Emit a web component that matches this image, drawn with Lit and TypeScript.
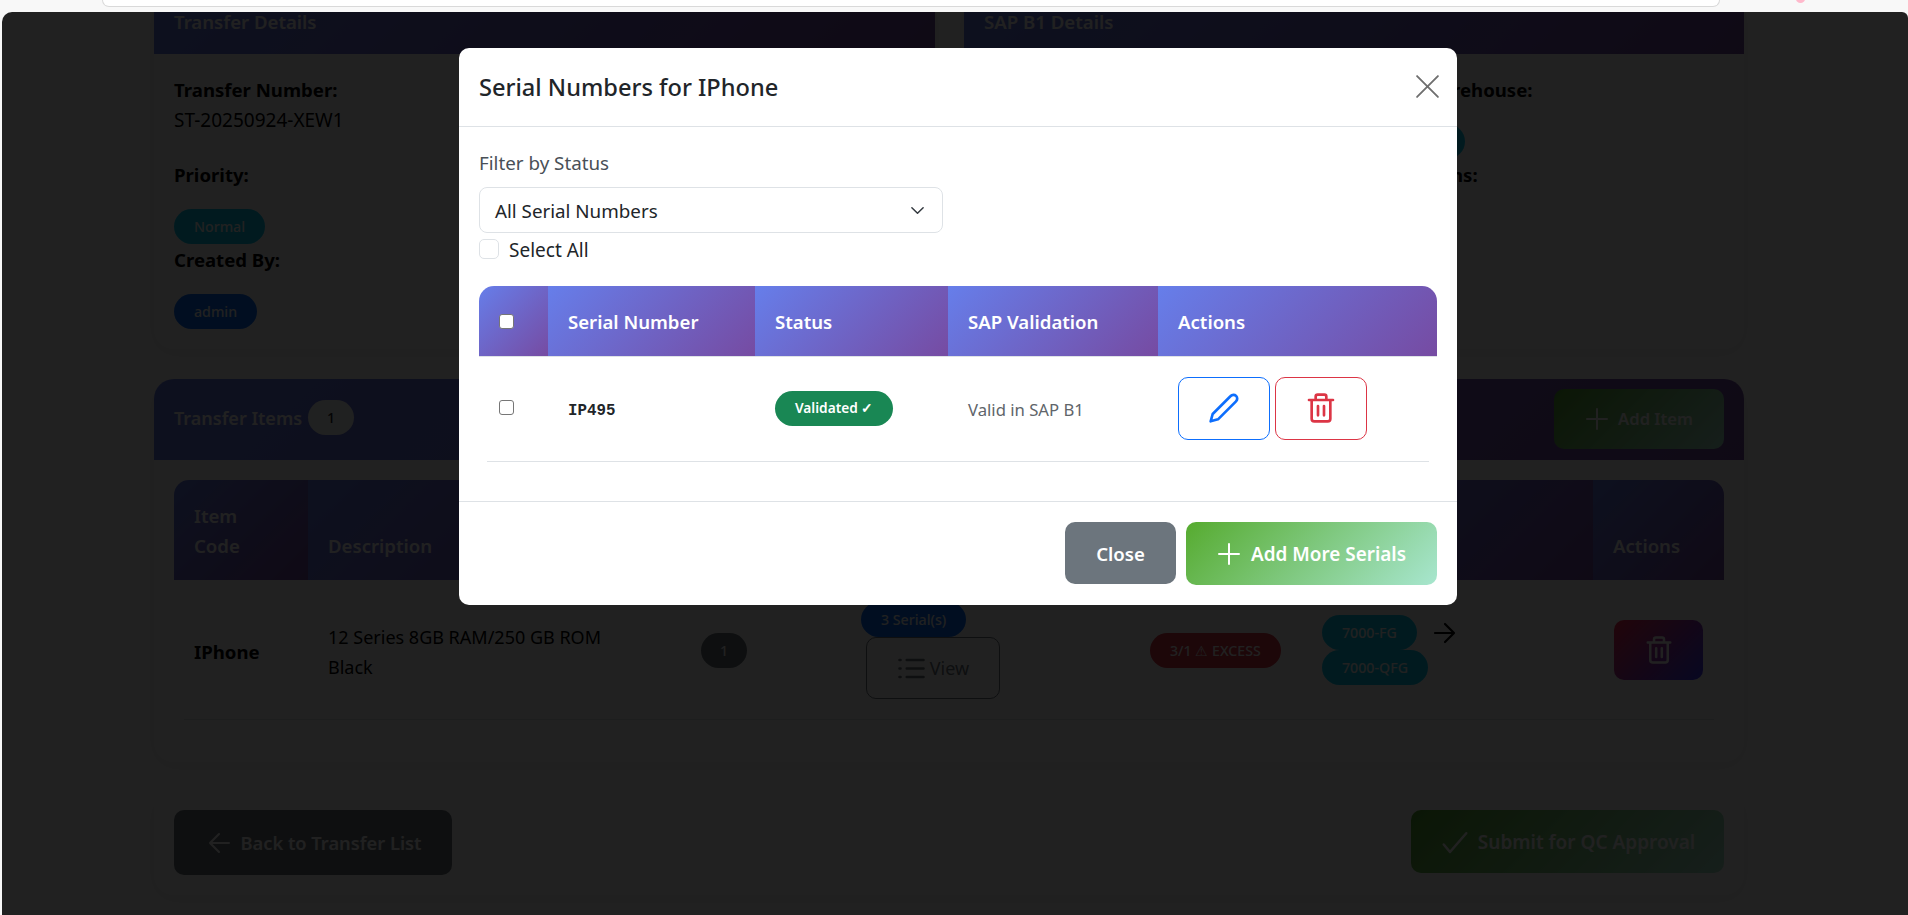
import {LitElement, html, css, svg} from 'lit';
import {customElement} from 'lit/decorators.js';

const icon = (body: unknown, size: number, sw = 2) => html`<svg width=${size} height=${size} viewBox="0 0 24 24" fill="none" stroke="currentColor" stroke-width=${sw} stroke-linecap="round" stroke-linejoin="round">${body}</svg>`;

const plus = svg`<path d="M12 2v20M2 12h20"/>`;
const pencil = svg`<path d="M17 3a2.83 2.83 0 1 1 4 4L7.5 20.5 2 22l1.5-5.5L17 3z"/>`;
const trash = svg`<path d="M3 6h18M8 6V3.5A1.5 1.5 0 0 1 9.5 2h5A1.5 1.5 0 0 1 16 3.5V6M5 6v14a2 2 0 0 0 2 2h10a2 2 0 0 0 2-2V6M9.75 10.5v7M14.25 10.5v7"/>`;
const arrowLeft = svg`<path d="M21 12H3M11 3l-9 9 9 9"/>`;
const arrowRight = svg`<path d="M3 12h18M13 3l9 9-9 9"/>`;
const check = svg`<path d="M3 14l5 6L21 5"/>`;
const list = svg`<path d="M8 5h14M8 12h14M8 19h14M2 5h1M2 12h1M2 19h1"/>`;

@customElement('serial-modal')
export class SerialModal extends LitElement {
  static styles = css`
    :host {
      display: flex;
      flex-direction: column;
      width: 998px;
      background: #fff;
      border-radius: 10px;
      color: #212529;
      font-family: "Noto Sans", sans-serif;
    }
    .head {
      height: 78px;
      padding: 0 20px;
      display: flex;
      align-items: center;
      justify-content: space-between;
      border-bottom: 1px solid #dee2e6;
    }
    h5 {
      margin: 0;
      font-size: 23.6px;
      font-weight: 500;
    }
    .close-x {
      color: #6f6f6f;
      display: flex;
      margin: 0 -3px 2px 0;
    }
    .body {
      padding: 24px 20px 0;
      height: 375px;
      box-sizing: border-box;
      border-bottom: 1px solid #dee2e6;
      flex: none;
    }
    .label {
      line-height: 24px;
      font-size: 18.8px;
      color: #495057;
      margin-bottom: 12px;
    }
    .select {
      width: 464px;
      height: 46px;
      box-sizing: border-box;
      border: 1px solid #dee2e6;
      border-radius: 8px;
      padding: 0 17px 0 15px;
      display: flex;
      align-items: center;
      justify-content: space-between;
      font-size: 18.8px;
    }
    .select span { padding-top: 1px; }
    .select svg { width: 15px; height: 15px; }
    .select-all {
      display: flex;
      align-items: center;
      gap: 10px;
      margin-top: 6px;
      height: 20px;
      font-size: 19px;
    }
    .select-all span { padding-top: 1px; }
    .box {
      appearance: none;
      margin: 0;
      flex: none;
      box-sizing: border-box;
      background: #fff;
    }
    .box.big {
      width: 20px;
      height: 20px;
      border: 1px solid #dee2e6;
      border-radius: 5px;
    }
    .box.small {
      width: 15px;
      height: 15px;
      border: 1px solid #767676;
      border-radius: 3px;
    }
    .table { margin-top: 27px; }
    .thead {
      display: grid;
      grid-template-columns: 69px 207px 193px 210px 279px;
      height: 71px;
      box-sizing: border-box;
      border-bottom: 1px solid #dee2e6;
      border-radius: 15px 15px 0 0;
      overflow: hidden;
    }
    .thead > div {
      display: flex;
      align-items: center;
      padding-left: 20px;
      background: linear-gradient(135deg, #667eea 0%, #764ba2 100%);
      color: #fff;
      font-size: 18.6px;
      font-weight: 600;
    }
    .tr {
      display: grid;
      grid-template-columns: 61px 207px 193px 210px 271px;
      height: 105px;
      box-sizing: border-box;
      margin: 0 8px;
      border-bottom: 1px solid #dee2e6;
      align-items: center;
    }
    .tr > div { padding-left: 20px; }
    .tr > div:first-child { padding-left: 12px; display: flex; margin-top: -3px; }
    .serial {
      font-family: "Liberation Mono", monospace;
      font-weight: 700;
      font-size: 15.8px;
      padding-top: 3px;
    }
    .pill {
      display: inline-block;
      background: #198754;
      color: #fff;
      padding: 0 20px;
      height: 35px;
      line-height: 34px;
      border-radius: 18px;
      font-size: 13.7px;
      font-weight: 600;
      margin-top: -1px;
    }
    .valid { color: #60656a; font-size: 16.7px; }
    .btns { display: flex; gap: 5px; margin-top: -2px; }
    .btns span {
      width: 92px;
      height: 63px;
      box-sizing: border-box;
      display: flex;
      align-items: center;
      justify-content: center;
      border-radius: 10px;
      border: 1px solid;
    }
    .edit { border-color: #0d6efd; color: #0d6efd; }
    .del { border-color: #dc3545; color: #dc3545; }
    .foot {
      display: flex;
      justify-content: flex-end;
      gap: 10px;
      padding: 20px;
    }
    .btn {
      display: flex;
      align-items: center;
      justify-content: center;
      color: #fff;
      font-size: 18.6px;
      font-weight: 600;
      border-radius: 10px;
      height: 63px;
    }
    .btn.close {
      width: 111px;
      height: 62px;
      background: #6c757d;
    }
    .btn.add {
      width: 251px;
      gap: 10px;
      font-size: 18.9px;
      background: linear-gradient(135deg, #56ab2f 0%, #a8e6cf 100%);
    }
  `;

  render() {
    return html`
      <div class="head">
        <h5>Serial Numbers for IPhone</h5>
        <span class="close-x">${icon(svg`<path d="M2 2l20 20M22 2L2 22"/>`, 25, 1.8)}</span>
      </div>
      <div class="body">
        <div class="label">Filter by Status</div>
        <div class="select">
          <span>All Serial Numbers</span>
          <svg viewBox="0 0 16 16" fill="none" stroke="#343a40" stroke-width="1.6" stroke-linecap="round" stroke-linejoin="round"><path d="m2 5 6 6 6-6"/></svg>
        </div>
        <div class="select-all"><input class="box big" type="checkbox" /><span>Select All</span></div>
        <div class="table">
          <div class="thead">
            <div><input class="box small" type="checkbox" /></div>
            <div>Serial Number</div>
            <div>Status</div>
            <div>SAP Validation</div>
            <div>Actions</div>
          </div>
          <div class="tr">
            <div><input class="box small" type="checkbox" /></div>
            <div class="serial">IP495</div>
            <div><span class="pill">Validated ✓</span></div>
            <div class="valid">Valid in SAP B1</div>
            <div class="btns">
              <span class="edit">${icon(pencil, 32, 2)}</span>
              <span class="del">${icon(trash, 32, 2)}</span>
            </div>
          </div>
        </div>
      </div>
      <div class="foot">
        <div class="btn close">Close</div>
        <div class="btn add">${icon(plus, 24, 2)}Add More Serials</div>
      </div>
    `;
  }
}

@customElement('app-root')
export class AppRoot extends LitElement {
  static styles = css`
    :host {
      display: block;
      width: 1908px;
      height: 915px;
      overflow: hidden;
      background: #f8f8f8;
      font-family: "Noto Sans", sans-serif;
      color: #000;
    }
    .chrome {
      height: 12px;
      padding: 0 188px 0 102px;
      position: relative;
    }
    .omnibox {
      height: 6px;
      background: #fff;
      border: 1px solid #d9d9d9;
      border-top: none;
      border-radius: 0 0 14px 14px;
    }
    .dot {
      position: absolute;
      top: -5px;
      left: 1796px;
      width: 9px;
      height: 8px;
      border-radius: 50%;
      background: #ffb9cc;
    }
    .viewport {
      position: relative;
      margin-left: 2px;
      height: 903px;
      overflow: hidden;
      background: #fff;
      border-radius: 10px 6px 0 0;
    }
    .page {
      width: 1590px;
      margin: -18px 0 0 152px;
      font-size: 18.6px;
    }
    .backdrop {
      position: absolute;
      inset: 0;
      background: rgba(0, 0, 0, 0.87);
    }
    .dialog {
      position: absolute;
      left: 457px;
      top: 36px;
    }
    .details {
      display: grid;
      grid-template-columns: 781px 780px;
      gap: 29px;
    }
    .card {
      background: #fff;
      border-radius: 20px;
      box-shadow: 0 4px 20px rgba(0, 0, 0, 0.08);
    }
    .card-head {
      height: 60px;
      box-sizing: border-box;
      padding: 18px 20px 0;
      line-height: 20px;
      color: #fff;
      font-weight: 600;
      background: linear-gradient(135deg, #667eea 0%, #764ba2 100%);
    }
    .card-body {
      padding: 24px 20px 20px;
      height: 295px;
      box-sizing: border-box;
    }
    .split {
      display: grid;
      grid-template-columns: 375px 365px;
    }
    .field-label { font-weight: 700; line-height: 24px; }
    .field-value { line-height: 24px; margin-top: 6px; font-size: 19px; }
    .gap-a { margin-top: 31px; }
    .gap-b { margin-top: 4px; }
    .badge {
      display: inline-block;
      height: 35px;
      line-height: 35px;
      padding: 0 20px;
      border-radius: 18px;
      color: #fff;
      font-size: 14.2px;
      font-weight: 500;
    }
    .badge.one { padding: 0 19px; }
    .stack .badge { display: block; width: fit-content; }
    .info { background: #0dcaf0; }
    .primary { background: #0d6efd; }
    .muted { background: #6c757d; }
    .danger { background: #dc3545; }
    .light { background: #f8f9fa; color: #212529; }
    .mt { margin-top: 22px; height: 35px; }
    .items { margin-top: 30px; height: 383px; overflow: hidden; }
    .items-head {
      height: 81px;
      box-sizing: border-box;
      padding: 0 20px;
      display: flex;
      align-items: center;
      justify-content: space-between;
      color: #fff;
      font-weight: 600;
      background: linear-gradient(135deg, #667eea 0%, #764ba2 100%);
    }
    .items-title { display: flex; align-items: center; gap: 6px; margin-top: -4px; font-size: 18px; }
    .add-item {
      width: 170px;
      height: 60px;
      display: flex;
      align-items: center;
      justify-content: center;
      gap: 9px;
      font-size: 16.6px;
      border-radius: 10px;
      margin-top: -2px;
      background: linear-gradient(135deg, #56ab2f 0%, #a8e6cf 100%);
    }
    .table { padding: 20px; }
    .row {
      display: grid;
      grid-template-columns: 134px 373px 165px 284px 172px 291px 131px;
    }
    .row.th {
      height: 100px;
      border-radius: 15px 15px 0 0;
      overflow: hidden;
      color: #fff;
      font-weight: 600;
      line-height: 30px;
    }
    .row.th > div {
      padding: 0 20px 19px;
      display: flex;
      align-items: flex-end;
      background: linear-gradient(135deg, #667eea 0%, #764ba2 100%);
    }
    .row.td {
      height: 140px;
      box-sizing: border-box;
      align-items: center;
      line-height: 30px;
    }
    .row.td > div { padding-left: 20px; }
    .rule { height: 1px; margin: -1px 10px 0; background: #dee2e6; }
    .item-code { font-weight: 700; padding-top: 3px; }
    .desc { padding-top: 3px; padding-right: 40px; font-size: 18px; }
    .serials { display: flex; flex-direction: column; align-items: flex-start; margin-left: -5px; padding-top: 1px; }
    .view {
      width: 134px;
      height: 62px;
      margin-left: 5px;
      box-sizing: border-box;
      border: 1px solid #6c757d;
      border-radius: 10px;
      color: #6c757d;
      display: flex;
      align-items: center;
      justify-content: center;
      gap: 4px;
      font-size: 18px;
    }
    .wh { display: flex; align-items: center; gap: 4px; }
    .wh svg { margin-top: -34px; }
    .del-item {
      width: 89px;
      height: 60px;
      margin-left: 1px;
      border-radius: 10px;
      display: flex;
      align-items: center;
      justify-content: center;
      color: #fff;
      background: linear-gradient(135deg, #ff2a4d 0%, #3a3aff 100%);
    }
    .bottom {
      margin-top: 28px;
      height: 105px;
      box-sizing: border-box;
      padding: 20px;
      display: flex;
      justify-content: space-between;
      align-items: flex-start;
    }
    .action {
      height: 65px;
      display: flex;
      align-items: center;
      justify-content: center;
      gap: 8px;
      color: #fff;
      font-weight: 600;
      border-radius: 10px;
    }
    .back { width: 278px; box-sizing: border-box; padding-left: 4px; background: #6c757d; font-size: 18.3px; }
    .submit {
      width: 313px;
      height: 63px;
      font-size: 19px;
      background: linear-gradient(135deg, #56ab2f 0%, #a8e6cf 100%);
    }
  `;

  render() {
    return html`
      <div class="chrome">
        <div class="omnibox"></div>
        <span class="dot"></span>
      </div>
      <div class="viewport">
        <div class="page">
          <div class="details">
            <section class="card">
              <div class="card-head">Transfer Details</div>
              <div class="card-body">
                <div class="field-label">Transfer Number:</div>
                <div class="field-value">ST-20250924-XEW1</div>
                <div class="field-label gap-a">Priority:</div>
                <div class="mt"><span class="badge info">Normal</span></div>
                <div class="field-label gap-b">Created By:</div>
                <div class="mt"><span class="badge primary">admin</span></div>
              </div>
            </section>
            <section class="card">
              <div class="card-head">SAP B1 Details</div>
              <div class="card-body split">
                <div></div>
                <div>
                  <div class="field-label">Target Warehouse:</div>
                  <div class="mt"><span class="badge info">7000-QFG</span></div>
                  <div class="field-label gap-b">Instructions:</div>
                </div>
              </div>
            </section>
          </div>

          <section class="card items">
            <div class="items-head">
              <div class="items-title">Transfer Items <span class="badge light one">1</span></div>
              <div class="add-item">${icon(plus, 24)}Add Item</div>
            </div>
            <div class="table">
              <div class="row th">
                <div>Item<br />Code</div>
                <div>Description</div>
                <div></div>
                <div></div>
                <div></div>
                <div></div>
                <div>Actions</div>
              </div>
              <div class="row td">
                <div class="item-code">IPhone</div>
                <div class="desc">12 Series 8GB RAM/250 GB ROM Black</div>
                <div><span class="badge muted one">1</span></div>
                <div class="serials">
                  <span class="badge primary">3 Serial(s)</span>
                  <span class="view">${icon(list, 29)}View</span>
                </div>
                <div><span class="badge danger">3/1 ⚠ EXCESS</span></div>
                <div class="wh">
                  <div class="stack">
                    <span class="badge info">7000-FG</span>
                    <span class="badge info">7000-QFG</span>
                  </div>
                  ${icon(arrowRight, 24, 2.2)}
                </div>
                <div><span class="del-item">${icon(trash, 30)}</span></div>
              </div>
              <div class="rule"></div>
            </div>
          </section>

          <section class="card bottom">
            <div class="action back">${icon(arrowLeft, 24)}Back to Transfer List</div>
            <div class="action submit">${icon(check, 30)}Submit for QC Approval</div>
          </section>
        </div>
        <div class="backdrop"></div>
        <serial-modal class="dialog"></serial-modal>
      </div>
    `;
  }
}
